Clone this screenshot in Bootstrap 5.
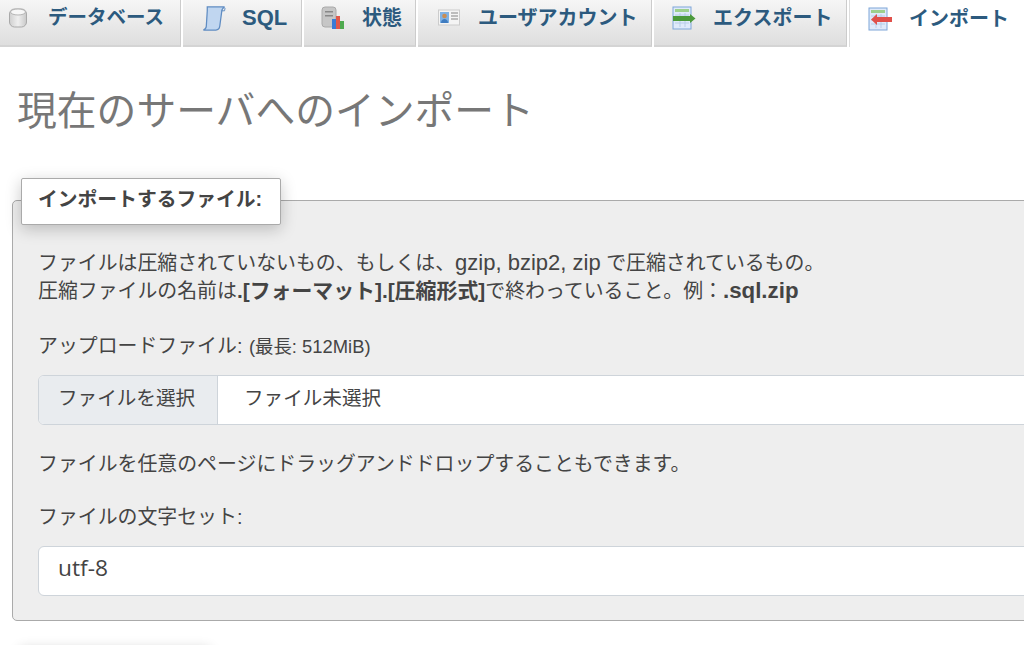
<!DOCTYPE html>
<html lang="ja">
<head>
<meta charset="utf-8">
<title>インポート</title>
<link href="https://cdn.jsdelivr.net/npm/bootstrap@5.3.0/dist/css/bootstrap.min.css" rel="stylesheet">
<style>
html,body{height:645px;overflow:hidden;background:#fff}
body{font-family:"Liberation Sans","Noto Sans CJK JP",sans-serif;color:#444;width:1024px}
.tabbar{height:47px;gap:2px;background:#fff}
.tabitem{height:47px;background:linear-gradient(#f6f6f6,#dedede);border-bottom:2px solid #d4d4d4;border-right:1px solid #ccc;color:#2c5a7e;font-weight:700;font-size:20px;line-height:1;padding-bottom:9px;text-decoration:none;flex:none}
.tabitem svg{flex:none}
.tab1{width:181px;padding-left:8px;gap:20px;font-size:19.500px}
.tab2{width:119px;padding-left:18px;gap:15px}
.tab2 span{font-size:22px}
.tab3{width:112px;padding-left:17px;gap:16px}
.tab4{width:234px;padding-left:19px;gap:17px}
.tab5{width:193px;padding-left:18px;gap:17px}
.tab6{flex:1;background:#fff;border:0;border-left:1px solid #ddd;padding-left:18px;gap:17px}
.pagetitle{font-size:39.8px;font-weight:400;color:#777;margin:41px 0 0 17px;line-height:46px;white-space:nowrap}
.uploadbox{position:relative;margin:66px 0 0 12px;width:1100px;height:421px;background:#eee;border:1px solid #aaa;border-radius:5px;padding:48px 0 0 25px;font-size:19.9px}
.boxlegend{position:absolute;left:8px;top:-23px;height:47px;width:260px;background:#fff;border:1px solid #aaa;border-radius:2px;box-shadow:0 4px 16px rgba(0,0,0,.22);font-size:19.8px;font-weight:700;color:#444;padding-left:16px;padding-bottom:3px;display:flex;align-items:center;white-space:nowrap}
.boxline{line-height:28px;white-space:nowrap;margin:0}
.boxline b{font-weight:700;font-size:20.9px}
.boxline b.extname{font-size:22.3px}
.latinrun{font-size:22px}
.limit{font-size:18.4px;margin-left:1px}
.labelrow{margin-top:27px;line-height:28px;white-space:nowrap}
.filerow{height:50px;width:1050px;margin-top:14px;background:#fff;border:1px solid #ced4da;border-radius:6px;overflow:hidden;white-space:nowrap;font-size:19.600px}
.pickbtn{width:179px;background:#e9ecef;border-right:1px solid #ced4da;padding-left:19px;line-height:44px;height:100%;flex:none}
.pickname{padding-left:26px;line-height:44px}
.hintline{margin-top:25px;line-height:28px;white-space:nowrap}
.charset{height:50px;width:1050px;margin-top:15px;background:#fff;border:1px solid #ced4da;border-radius:6px;padding-left:19px;line-height:42px;font-family:"Open Sans","Noto Sans",sans-serif;font-size:22.700px}
.nextshadow{position:absolute;left:20px;top:649px;width:190px;height:40px;background:#fff;box-shadow:0 0 12px rgba(0,0,0,.2)}
</style>
</head>
<body>
<nav class="tabbar d-flex align-items-stretch">
<a class="tabitem tab1 d-flex align-items-center" href="#"><svg width="20" height="22" viewBox="0 0 20 22"><defs><linearGradient id="dbfill" x1="0" x2="1" y1="0" y2="0"><stop offset="0" stop-color="#cfcfcf"/><stop offset=".5" stop-color="#efefef"/><stop offset="1" stop-color="#c8c8c8"/></linearGradient></defs><rect x="1.500" y="2" width="17" height="18" rx="5" fill="url(#dbfill)" stroke="#a9a9a9"/><ellipse cx="10" cy="5" rx="7.500" ry="3" fill="#f7f7f7" stroke="#b5b5b5"/></svg><span>データベース</span></a>
<a class="tabitem tab2 d-flex align-items-center" href="#"><svg width="26" height="25" viewBox="0 0 26 26"><path d="M6 1h18c-2 1-3 3-3 5l-2 15c-.3 2-1.500 4-4 4H2c2-1 3-2 3-4L6 5z" fill="#c0d6f0" stroke="#5f8cc2" stroke-width="1.300"/><path d="M21 5h3l.5-3" fill="none" stroke="#5f8cc2"/></svg><span>SQL</span></a>
<a class="tabitem tab3 d-flex align-items-center" href="#"><svg width="25" height="24" viewBox="0 0 25 24"><rect x="1" y="1" width="14" height="20" rx="3" fill="#c6c6c6" stroke="#aaa"/><rect x="4" y="5" width="8" height="1.500" fill="#888"/><rect x="4" y="9" width="8" height="1.500" fill="#888"/><rect x="11" y="13" width="4" height="10" fill="#3a7bd5"/><rect x="15" y="10" width="4" height="13" fill="#e0584a"/><rect x="19" y="15" width="4" height="8" fill="#4faa4f"/></svg><span>状態</span></a>
<a class="tabitem tab4 d-flex align-items-center" href="#"><svg width="24" height="20" viewBox="0 0 22 20"><rect x=".5" y="2" width="21" height="15" fill="#f4f4f4" stroke="#ccc"/><rect x="2" y="4" width="9" height="11" fill="#7fb2e5"/><circle cx="6.500" cy="8" r="2.300" fill="#c98d54"/><path d="M3 15c0-3 2-4 3.500-4S10 12 10 15z" fill="#3f7cc0"/><path d="M13 5h7M13 8h7M13 11h7" stroke="#a9a9a9" stroke-width="1.300"/></svg><span>ユーザアカウント</span></a>
<a class="tabitem tab5 d-flex align-items-center" href="#"><svg width="24" height="24" viewBox="0 0 24 24"><rect x="1" y="1" width="18" height="22" fill="#dfeafa" stroke="#7ea6d8"/><rect x="3" y="3" width="14" height="3" fill="#9dd08c"/><path d="M3 9h14M3 13h14M3 17h14M8 7v14M13 7v14" stroke="#b8cde8"/><path d="M1 10h17V8l5.500 4.500L18 17v-2H1z" fill="#4c9a3c"/></svg><span>エクスポート</span></a>
<a class="tabitem tab6 d-flex align-items-center" href="#"><svg width="24" height="24" viewBox="0 0 24 24"><rect x="1" y="1" width="18" height="22" fill="#dfeafa" stroke="#7ea6d8"/><rect x="3" y="3" width="14" height="3" fill="#9dd08c"/><path d="M3 9h14M3 13h14M3 17h14M8 7v14M13 7v14" stroke="#b8cde8"/><path d="M24 10H9V7l-6 5.500L9 18v-3h15z" fill="#e0504a"/></svg><span>インポート</span></a>
</nav>
<h2 class="pagetitle">現在のサーバへのインポート</h2>
<div class="uploadbox">
<div class="boxlegend">インポートするファイル:</div>
<p class="boxline">ファイルは圧縮されていないもの、もしくは、<span class="latinrun">gzip, bzip2, zip</span> で圧縮されているもの。</p>
<p class="boxline">圧縮ファイルの名前は<b>.[フォーマット].[圧縮形式]</b>で終わっていること。例：<b class="extname">.sql.zip</b></p>
<div class="labelrow">アップロードファイル: <span class="limit">(最長: 512MiB)</span></div>
<div class="filerow d-flex"><div class="pickbtn">ファイルを選択</div><div class="pickname">ファイル未選択</div></div>
<div class="hintline">ファイルを任意のページにドラッグアンドドロップすることもできます。</div>
<div class="hintline">ファイルの文字セット:</div>
<div class="charset">utf-8</div>
</div>
<div class="nextshadow"></div>
<script src="https://cdn.jsdelivr.net/npm/bootstrap@5.3.0/dist/js/bootstrap.bundle.min.js"></script>
</body>
</html>
